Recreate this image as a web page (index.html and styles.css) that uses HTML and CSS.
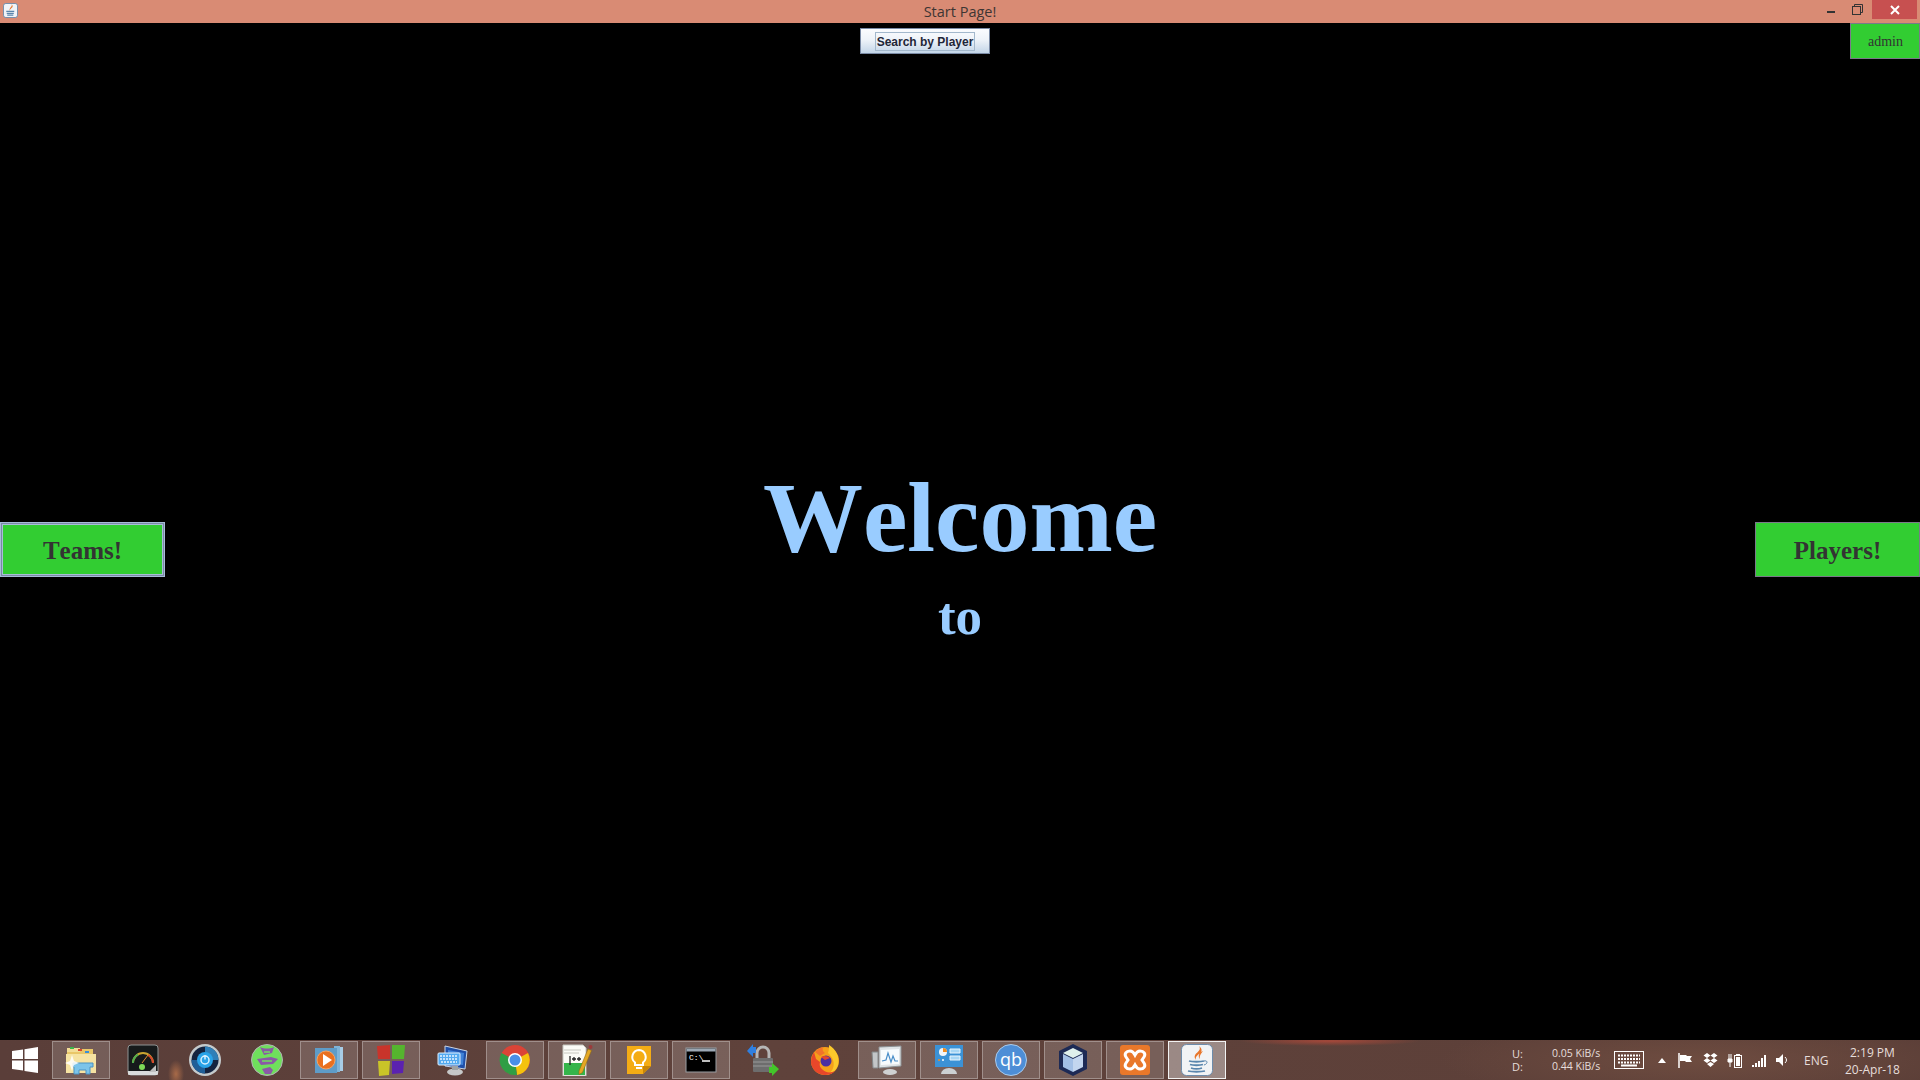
FILE: index.html
```html
<!DOCTYPE html>
<html lang="en">
<head>
    <meta charset="UTF-8">
    <title>Start Page!</title>
    <link rel="stylesheet" href="styles.css">
</head>
<body>
    <div class="window">
        <div class="titlebar">
            <svg class="app-icon" viewBox="0 0 32 32">
                <rect x="1" y="1" width="30" height="30" rx="5" fill="#f1f4f8" stroke="#6d8cab" stroke-width="2"/>
                <path d="M18 2c4 6-7 8-3 15-2-6 11-7 3-15z" fill="#e8762b"/>
                <path d="M7 18h17M8 22h15M9 26h13" stroke="#5a86ad" stroke-width="2.500"/>
            </svg>
            <span class="title">Start Page!</span>
            <div class="win-controls">
                <span class="win-min"></span>
                <svg class="win-restore" viewBox="0 0 11 11">
                    <path d="M2.500 2.500V.5h8v8h-2" fill="none" stroke="#333"/>
                    <rect x=".5" y="2.500" width="8" height="8" fill="none" stroke="#333"/>
                </svg>
                <div class="win-close">
                    <svg viewBox="0 0 10 10" width="10" height="10"><path d="M1 1l8 8M9 1l-8 8" stroke="#fff" stroke-width="2"/></svg>
                </div>
            </div>
        </div>

        <div class="content">
            <div class="top-row">
                <button class="search-btn"><span class="focus-rect">Search by Player</span></button>
                <button class="admin-btn">admin</button>
            </div>
            <div class="middle-row">
                <button class="side-btn teams">Teams!</button>
                <div class="welcome">
                    <div class="welcome-big">Welcome</div>
                    <div class="welcome-small">to</div>
                </div>
                <button class="side-btn players">Players!</button>
            </div>
        </div>

        <div class="taskbar">
            <div class="start">
                <svg viewBox="0 0 26 26" width="26" height="26"><path d="M0 4l11-1.600V12H0zM12.500 2.200L26 0v12H12.500zM0 13.500h11v10L0 22zM12.500 13.500H26V26l-13.500-2z" fill="#fff"/></svg>
            </div>
            <div class="task-list">
                <div class="task open">
                    <svg viewBox="0 0 32 32">
                        <path d="M2 5h26v23H2z" fill="#e9c768"/>
                        <path d="M2 4h13v4H2z" fill="#f3dd96"/>
                        <path d="M5 3h4v2H5z" fill="#3cb44b"/><path d="M13 5h4v2h-4z" fill="#d8452e"/><path d="M20 7h4v2h-4z" fill="#3a8fd8"/>
                        <path d="M1 10h30v19H1z" fill="#f6e3a2"/>
                        <path d="M8 19h20v4h-3v7h-4v-4h-7v4H9v-7H8z" fill="#7cc4ea" stroke="#4a94c4"/>
                        <path d="M7 11l2 6 5 2-5 2-2 6-2-6-5-2 5-2z" fill="#fff" opacity=".85"/>
                    </svg>
                </div>
                <div class="task">
                    <svg viewBox="0 0 32 32">
                        <rect x="1" y="1" width="30" height="30" rx="3" fill="#161a1b" stroke="#8f9494"/>
                        <path d="M1 27h30v3a1 1 0 0 1-1 1H2a1 1 0 0 1-1-1z" fill="#d9dcdc"/>
                        <path d="M6 19a10 10 0 0 1 20 0" fill="none" stroke="#c9a531" stroke-width="2"/>
                        <path d="M6 19a10 10 0 0 1 5-8.500" fill="none" stroke="#4caf50" stroke-width="2"/>
                        <path d="M21 11a10 10 0 0 1 5 8" fill="none" stroke="#d8452e" stroke-width="2"/>
                        <path d="M15 19l6-8" stroke="#e08a30" stroke-width="1"/>
                        <circle cx="15" cy="23" r="3" fill="#7ed957"/>
                        <path d="M22 28l7-7v7z" fill="#bdbfbf"/>
                    </svg>
                </div>
                <div class="task">
                    <svg viewBox="0 0 32 32">
                        <circle cx="16" cy="16" r="16" fill="#c4cacc"/>
                        <circle cx="16" cy="16" r="13.500" fill="#14233f"/>
                        <path d="M16 2.500A13.500 13.500 0 0 1 29.500 16H16z" fill="#2f7fb8"/>
                        <path d="M16 29.500A13.500 13.500 0 0 1 2.500 16H16z" fill="#1f5f98"/>
                        <circle cx="16" cy="16" r="8" fill="#29a3e8"/>
                        <circle cx="16" cy="16" r="4" fill="none" stroke="#d8f1ff" stroke-width="1.500"/>
                        <path d="M16 11v4.500" stroke="#d8f1ff" stroke-width="1.500"/>
                    </svg>
                </div>
                <div class="task">
                    <svg viewBox="0 0 32 32">
                        <circle cx="16" cy="16" r="15.500" fill="#6fe05c" stroke="#b4b0b6"/>
                        <path d="M9 3c4 2 10 2 14 0l-2 6-8 2zM6 15l14-2 7 2-5 5-12 1zM11 25l8-2 3 3-2 4-6 0z" fill="#8a5aa6"/>
                        <path d="M13 8h6M11 17h10" stroke="#6fe05c" stroke-width="1.500"/>
                    </svg>
                </div>
                <div class="task open">
                    <svg viewBox="0 0 32 32">
                        <path d="M24 3h6v24h-6z" fill="#a8cde6"/><path d="M21 2h6v26h-6z" fill="#7fb4d8"/>
                        <path d="M2 4h22v25H2z" fill="#5e9cc8"/>
                        <circle cx="13" cy="16" r="9" fill="#e9701f" stroke="#f4a261"/>
                        <path d="M10 10l9 6-9 6z" fill="#fff"/>
                    </svg>
                </div>
                <div class="task open">
                    <svg viewBox="0 0 32 32">
                        <path d="M2 2l13-1v14H3z" fill="#c9342b"/>
                        <path d="M17 1h13l-1 14H17z" fill="#55b52e"/>
                        <path d="M3 17h12l-1 14-10 1z" fill="#c9c428"/>
                        <path d="M17 17h12l-1 12-11 1z" fill="#5b22b0"/>
                    </svg>
                </div>
                <div class="task">
                    <svg viewBox="0 0 32 32">
                        <path d="M8 2l22 5-2 18-20-3z" fill="#1f4fa8" stroke="#c9d4e4"/>
                        <path d="M11 6l16 3-1 12-15-2z" fill="#3f82d8"/>
                        <rect x="1" y="9" width="22" height="12" rx="1" fill="#54aaf0" stroke="#dff0ff"/>
                        <path d="M3 12h18M3 15h18M4 18h16" stroke="#e8f5ff" stroke-width="1.500" stroke-dasharray="2 1"/>
                        <ellipse cx="18" cy="28" rx="8" ry="3.500" fill="#c6c8c8"/>
                        <path d="M15 22h6v4h-6z" fill="#9ea2a4"/>
                    </svg>
                </div>
                <div class="task open">
                    <svg viewBox="0 0 32 32">
                        <circle cx="16" cy="16" r="15" fill="#db4437"/>
                        <path d="M16 16L29 9a15 15 0 0 1-11 21.900z" fill="#f4c20d"/>
                        <path d="M16 16l2 14.900A15 15 0 0 1 2.500 9z" fill="#2f9e44"/>
                        <path d="M3 9a15 15 0 0 1 26 0H16z" fill="#db4437"/>
                        <circle cx="16" cy="16" r="7" fill="#fff"/>
                        <circle cx="16" cy="16" r="5.500" fill="#4a8fe7"/>
                    </svg>
                </div>
                <div class="task open">
                    <svg viewBox="0 0 32 32">
                        <path d="M2 1h20l3 3v28H2z" fill="#fbfbf6" stroke="#c8c8c0"/>
                        <path d="M3 19h21v12H3z" fill="#35b54a"/>
                        <path d="M3 6h17M3 9h15" stroke="#c8c8c0"/>
                        <path d="M9 12v9M13 13v4M11 15h4M18 13v4M16 15h4" stroke="#222" stroke-width="1.300"/>
                        <path d="M18 27L27 5l3.500 1.500-9 22-3.500 2z" fill="#e5a823" stroke="#8d6a14" stroke-width=".6"/>
                        <circle cx="29.500" cy="3" r="2" fill="#9c3b3b"/>
                    </svg>
                </div>
                <div class="task open">
                    <svg viewBox="0 0 32 32">
                        <path d="M4 2h24v20l-8 8H4z" fill="#f4ac15"/>
                        <path d="M28 22l-8 8v-8z" fill="#c98608"/>
                        <path d="M16 6a7 7 0 0 1 4 12.500V21h-8v-2.500A7 7 0 0 1 16 6z" fill="none" stroke="#fff" stroke-width="2"/>
                        <path d="M13 24h6" stroke="#fff" stroke-width="2"/>
                    </svg>
                </div>
                <div class="task open">
                    <svg viewBox="0 0 32 32">
                        <rect x="1" y="4" width="30" height="24" fill="#000" stroke="#9a9ea2"/>
                        <path d="M1.500 4.500h29v3h-29z" fill="#9ca8b4"/>
                        <text x="4" y="16" class="cmd-text">C:\</text>
                        <path d="M17 17h8" stroke="#fff" stroke-width="1.500"/>
                    </svg>
                </div>
                <div class="task">
                    <svg viewBox="0 0 32 32">
                        <path d="M10 15V9a6 6 0 0 1 12 0v6" fill="none" stroke="#b5b5b5" stroke-width="3"/>
                        <rect x="6" y="14" width="20" height="14" rx="1" fill="#6d6d6d"/>
                        <path d="M6 18h20M6 22h20" stroke="#9a9a9a"/>
                        <path d="M0 7l6-7v3h3v6H6v4z" fill="#2f7fe0"/>
                        <path d="M32 25l-7 7v-3h-3v-6h3v-4z" fill="#43c52a"/>
                    </svg>
                </div>
                <div class="task">
                    <svg viewBox="0 0 32 32">
                        <circle cx="16" cy="17" r="14" fill="#f5a01a"/>
                        <path d="M20 1c7 4 11 12 9 20-2 6-7 10-13 10 8-2 10-9 8-15-1-3-3-5-5-7 1-3 1-5 1-8z" fill="#fbc92c"/>
                        <path d="M2 19c1 7 7 12 14 12 4 0 7-1 10-4-4 2-9 2-12-1-3-2-4-5-3-8l-4-3-2-7c-2 3-3 7-3 11z" fill="#e8472a"/>
                        <path d="M6 8c2-3 5-4 8-5-1 3 0 5 2 6l-5 3z" fill="#f2732a"/>
                        <circle cx="17" cy="17" r="5.500" fill="#4b2fa0"/>
                        <path d="M12 13c3-2 7-1 9 1l-5 2z" fill="#e8472a"/>
                    </svg>
                </div>
                <div class="task open">
                    <svg viewBox="0 0 32 32">
                        <path d="M8 3l22-1v20L8 24z" fill="#dfe3e6" stroke="#8d9295"/>
                        <path d="M10 6l18-1v15l-18 1z" fill="#f8fbfd"/>
                        <path d="M11 17l4-1 2-7 3 9 2-6 2 5h3" fill="none" stroke="#4a8dc8" stroke-width="1.200"/>
                        <path d="M1 8h6v16H2z" fill="#c3c6c8" stroke="#84888a"/>
                        <ellipse cx="19" cy="28" rx="7" ry="3" fill="#cfd1d2"/>
                    </svg>
                </div>
                <div class="task open">
                    <svg viewBox="0 0 32 32">
                        <path d="M2 1h28v22H2z" fill="#3b92d6"/>
                        <circle cx="10" cy="8" r="4" fill="#f2f6f9"/><path d="M10 4a4 4 0 0 1 4 4h-4z" fill="#f08d22"/>
                        <path d="M17 5h10v4H17zM17 12h10v4H17z" fill="#a6d6f4" stroke="#e8f5fd"/>
                        <circle cx="6" cy="16" r="1" fill="#f08d22"/><circle cx="10" cy="16" r="1" fill="#fff"/>
                        <path d="M8 30a8 6 0 0 1 16 0z" fill="#ccd0d2"/>
                    </svg>
                </div>
                <div class="task open">
                    <svg viewBox="0 0 32 32">
                        <circle cx="16" cy="16" r="15.500" fill="#4d8ed6" stroke="#a9cbec"/>
                        <text x="16" y="22" class="qb-text">qb</text>
                    </svg>
                </div>
                <div class="task open">
                    <svg viewBox="0 0 32 32">
                        <path d="M16 0l14 7v18l-14 7-14-7V7z" fill="#1d2a55"/>
                        <path d="M16 4l10 5-10 5-10-5z" fill="#dff0ec"/>
                        <path d="M6 10l10 5v13L6 23z" fill="#a3c0e6"/>
                        <path d="M26 10l-10 5v13l10-5z" fill="#c3d6ef"/>
                    </svg>
                </div>
                <div class="task open">
                    <svg viewBox="0 0 32 32">
                        <rect x="1" y="1" width="30" height="30" rx="3" fill="#e9782a"/>
                        <path d="M11 7c-4 0-6 3-4 6l2 3-2 3c-2 3 0 6 4 6 3 0 4-2 5-4 1 2 2 4 5 4 4 0 6-3 4-6l-2-3 2-3c2-3 0-6-4-6-3 0-4 2-5 4-1-2-2-4-5-4z" fill="none" stroke="#fff" stroke-width="3"/>
                    </svg>
                </div>
                <div class="task active">
                    <svg viewBox="0 0 32 32">
                        <rect x=".5" y=".5" width="31" height="31" rx="5" fill="#f1f3f5" stroke="#6d8cab"/>
                        <path d="M18 2c4 6-8 7-3 14-2-6 11-7 3-14zM22 7c-5 2-5 6-3 8-1-3 1-5 3-8z" fill="#e8762b"/>
                        <path d="M8 17c3 1 12 1 15 0M9 20.500c3 1 10 1 13 0M10 24c3 1 8 1 11 0" stroke="#5a86ad" stroke-width="1.800" fill="none"/>
                        <path d="M23 17c4-1 4 3 0 4" fill="none" stroke="#5a86ad"/>
                        <path d="M7 27c4 1 13 1 17 0" stroke="#5a86ad" stroke-width="1.800" fill="none"/>
                    </svg>
                </div>
            </div>

            <div class="tray">
                <div class="net-labels"><span>U:</span><span>D:</span></div>
                <div class="net-speed"><span>0.05 KiB/s</span><span>0.44 KiB/s</span></div>
                <svg class="kb" viewBox="0 0 30 18" width="30" height="18">
                    <rect x=".5" y=".5" width="29" height="17" fill="none" stroke="#fff"/>
                    <path d="M4 4.500h22M4 8h22M4 11.500h22" stroke="#fff" stroke-width="2" stroke-dasharray="2 1"/>
                    <path d="M7 14.500h16" stroke="#fff" stroke-width="2"/>
                </svg>
                <svg class="caret" viewBox="0 0 8 5" width="8" height="5"><path d="M4 0l4 5H0z" fill="#fff"/></svg>
                <svg class="tray-icon flag" viewBox="0 0 15 15" width="15" height="15"><path d="M1 0v15" stroke="#fff" stroke-width="1.500"/><path d="M2 2h6l1 1h5l-2 3 2 3H8L7 8H2z" fill="#fff"/></svg>
                <svg class="tray-icon drop" viewBox="0 0 15 14" width="15" height="14"><path d="M4 0l3.500 2.500L4 5 .5 2.500zM11 0l3.500 2.500L11 5 7.500 2.500zM4 5l3.500 2.500L4 10 .5 7.500zM11 5l3.500 2.500L11 10 7.500 7.500zM4 11l3.500-2 3.500 2-3.500 3z" fill="#fff"/></svg>
                <svg class="tray-icon batt" viewBox="0 0 15 15" width="15" height="15"><path d="M1 6h4v3H1zM2 1v5M4 1v5M3 9v5" stroke="#fff" fill="#fff"/><rect x="7.500" y="2.500" width="7" height="12" fill="none" stroke="#fff"/><path d="M9 1h4v1H9zM9 4h4v9H9z" fill="#fff"/></svg>
                <svg class="tray-icon signal" viewBox="0 0 15 13" width="15" height="13"><path d="M0 11h2v2H0zM3 9h2v4H3zM6 7h2v6H6zM9 4h2v9H9zM12 1h2v12h-2z" fill="#fff"/></svg>
                <svg class="tray-icon vol" viewBox="0 0 12 14" width="12" height="14"><path d="M0 5h3l4-4v12l-4-4H0z" fill="#fff"/><path d="M9 4c2 2 2 4 0 6" fill="none" stroke="#fff"/></svg>
                <span class="lang">ENG</span>
                <div class="clock"><span>2:19 PM</span><span>20-Apr-18</span></div>
            </div>
        </div>
    </div>
</body>
</html>
```

FILE: styles.css
```css
* {
    box-sizing: border-box;
}
body {
    margin: 0;
    background: #000;
    font-kerning: none;
}
button {
    padding: 0;
    cursor: pointer;
    font-kerning: none;
}
.window {
    display: flex;
    flex-direction: column;
    width: 1920px;
    height: 1080px;
    overflow: hidden;
}

/* title bar */
.titlebar {
    position: relative;
    display: flex;
    justify-content: center;
    align-items: center;
    height: 23px;
    background-color: #d98b74;
}
.app-icon {
    position: absolute;
    left: 3px;
    top: 3px;
    width: 15px;
    height: 15px;
}
.title {
    font-family: "Open Sans", sans-serif;
    font-size: 14.500px;
    color: #3d3533;
}
.win-controls {
    position: absolute;
    right: 3px;
    top: 0;
    display: flex;
    align-items: flex-start;
}
.win-min {
    width: 8px;
    height: 2px;
    margin-top: 11px;
    margin-right: 17px;
    background-color: #333;
}
.win-restore {
    width: 11px;
    height: 11px;
    margin-top: 4px;
    margin-right: 9px;
}
.win-close {
    display: flex;
    align-items: center;
    justify-content: center;
    width: 45px;
    height: 19px;
    background-color: #c75050;
}

/* main area */
.content {
    flex: 1;
    display: flex;
    flex-direction: column;
    background-color: #000;
}
.top-row {
    display: flex;
    align-items: flex-start;
    padding-left: 860px;
    height: 36px;
}
.search-btn {
    display: flex;
    align-items: center;
    justify-content: center;
    width: 130px;
    height: 26px;
    margin-top: 5px;
    border: 1px solid #7a8aa5;
    background: linear-gradient(#fbfcfe, #eef3f9 45%, #c3d5e8);
}
.focus-rect {
    padding: 2px 1px 1px;
    border: 1px solid #a3b8cc;
    font-family: "Liberation Sans", Arial, sans-serif;
    font-size: 12px;
    font-weight: bold;
    line-height: 14px;
    color: #1f2638;
}
.admin-btn {
    width: 70px;
    height: 36px;
    margin-left: auto;
    padding: 2px 0 0 1px;
    border: 1px solid #7a7a8a;
    background-color: #32cd32;
    font-family: "Liberation Serif", "Times New Roman", serif;
    font-size: 14px;
    color: #333;
}
.middle-row {
    display: flex;
    align-items: flex-start;
    margin-top: 463px;
    height: 155px;
}
.side-btn {
    width: 165px;
    height: 55px;
    padding-top: 2px;
    background-color: #32cd32;
    font-family: "Liberation Serif", "Times New Roman", serif;
    font-size: 25px;
    font-weight: bold;
    color: #333;
}
.teams {
    border: 3px solid #a8bcd8;
    outline: 1px solid #7a8aa5;
    outline-offset: -2px;
}
.players {
    border: 1px solid #7a7a8a;
}
.welcome {
    flex: 1;
    display: flex;
    flex-direction: column;
    align-items: center;
    margin-top: -61px;
    font-family: "Liberation Serif", "Times New Roman", serif;
    font-weight: bold;
    color: #99ccff;
}
.welcome-big {
    font-size: 100px;
    line-height: 114px;
}
.welcome-small {
    font-size: 53px;
    line-height: 60px;
    margin-top: 11px;
}

/* taskbar */
.taskbar {
    display: flex;
    align-items: stretch;
    height: 40px;
    background:
        radial-gradient(ellipse 90px 5px at 1330px 1px, #a5483a, transparent),
        radial-gradient(ellipse 8px 14px at 176px 34px, #a86a48, transparent),
        radial-gradient(ellipse 260px 40px at 1700px 20px, #6e4c40, transparent),
        linear-gradient(90deg, #5a3e39, #5f423b 40%, #5c3f38);
}
.start {
    display: flex;
    align-items: center;
    justify-content: center;
    width: 52px;
    padding-right: 2px;
}
.task-list {
    display: flex;
    gap: 4px;
    padding-top: 1px;
}
.task {
    display: flex;
    align-items: center;
    justify-content: center;
    width: 58px;
    height: 38px;
}
.task svg {
    width: 32px;
    height: 32px;
}
.task.open {
    border: 1px solid rgba(255, 255, 255, 0.3);
    background-color: rgba(255, 255, 255, 0.16);
}
.task.active {
    border: 1px solid #f2f2f2;
    background-color: rgba(255, 255, 255, 0.38);
}
.cmd-text {
    font-family: "Liberation Mono", monospace;
    font-size: 8px;
    fill: #fff;
}
.qb-text {
    font-family: "Open Sans", sans-serif;
    font-size: 18px;
    text-anchor: middle;
    fill: #fff;
}

/* tray */
.tray {
    flex: 1;
    display: flex;
    align-items: center;
    padding-left: 286px;
    font-family: "Open Sans", sans-serif;
    color: #e6dedb;
}
.net-labels,
.net-speed,
.clock {
    display: flex;
    flex-direction: column;
}
.net-labels {
    width: 40px;
    font-size: 11px;
    line-height: 13px;
}
.net-speed {
    width: 62px;
    font-size: 10.500px;
    line-height: 13px;
}
.caret {
    margin-left: 14px;
    margin-right: 12px;
}
.tray-icon {
    margin-right: 9.500px;
}
.vol {
    margin-right: 16px;
}
.lang {
    font-size: 12px;
}
.clock {
    align-items: center;
    width: 62px;
    margin-top: 2px;
    margin-left: 13px;
    font-size: 12px;
    line-height: 17px;
}
```
